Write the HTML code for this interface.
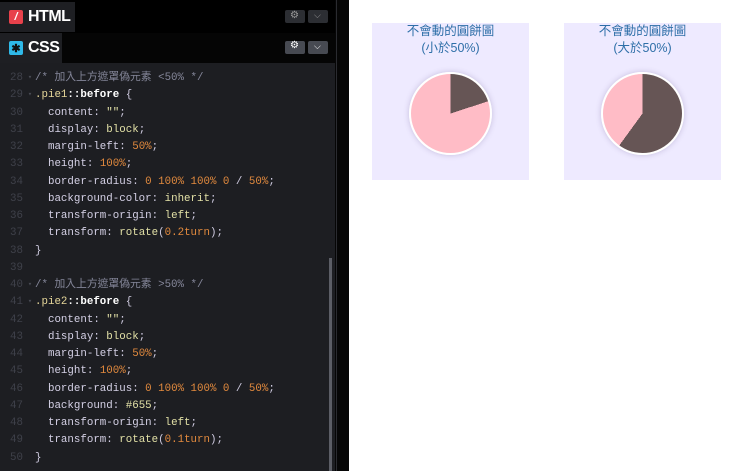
<!DOCTYPE html>
<html><head><meta charset="utf-8">
<style>
*{margin:0;padding:0;box-sizing:border-box}
body{width:740px;height:471px;overflow:hidden;background:#fff;position:relative;font-family:"Liberation Sans","Noto Sans CJK TC",sans-serif}
#left{position:absolute;left:0;top:0;width:349px;height:471px;background:#060606;overflow:hidden}
#ed{position:absolute;left:0;top:0;width:335px;height:471px;background:#1d1e22;overflow:hidden}
.bar{position:absolute;left:0;width:335px;background:#050505}
.tab{position:absolute;left:0;height:100%;display:flex;align-items:center;padding-left:9px;color:#fff;font-weight:bold;font-size:16px;letter-spacing:-0.5px}
.ico{width:14px;height:14px;border-radius:2px;margin-right:5px;display:flex;align-items:center;justify-content:center;font-size:11px;color:#111;letter-spacing:0}
.btn{position:absolute;height:13px;background:#3a3c43;border-radius:2px}
.code{position:absolute;left:0;top:70px;width:330px;font-family:"Liberation Mono","Noto Sans CJK TC",monospace;font-size:10.8px;color:#cfcbe0;white-space:normal}
.code div{height:17.25px;line-height:17.25px;overflow:hidden;white-space:pre}
.ln{display:inline-block;width:25px;text-align:right;color:#3f414a;padding-right:2px}
.ar{display:inline-block;width:10px;color:#4a4c55;font-size:7px;text-align:center;vertical-align:top}
.c{color:#85879a}.s{color:#e6d79a}.w{color:#fff;font-weight:bold}.k{color:#e2e0a6}.n{color:#e28a3e}.p{color:#d5d1e6}
#sb{position:absolute;left:329px;top:258px;width:3px;height:213px;background:#5c5e66}
.box{position:absolute;top:23px;width:157px;height:157px;background:#eeeaff;text-align:center;color:#2e6fa8;font-size:12.5px;line-height:17px;padding-top:0}
.pie{position:absolute;left:37px;top:49px;width:83px;height:83px;border-radius:50%;border:2px solid #fff;box-shadow:0 0 6px rgba(80,60,120,.25)}
</style></head><body>
<div id="left">
<div id="ed">
<div class="bar" style="top:0;height:33px;background:#000">
 <div class="tab" style="background:#1e1f23;width:75px;top:2px;height:30px"><span class="ico" style="background:#e8414b;color:#fff;font-style:italic">/</span>HTML</div>
 <div class="btn" style="left:285px;top:10px;width:20px;background:#2c2e33"></div>
 <div class="btn" style="left:308px;top:10px;width:20px;background:#2c2e33"></div>
 <div style="position:absolute;left:290px;top:10px;color:#999;font-size:10px">⚙</div>
 <div style="position:absolute;left:314px;top:10px;color:#999;font-size:9px">⌵</div>
</div>
<div class="bar" style="top:33px;height:30px;background:#050505">
 <div class="tab" style="background:#1e1f23;width:62px;top:0;height:30px"><span class="ico" style="background:#2fb9e8">✱</span>CSS</div>
 <div class="btn" style="left:285px;top:8px;width:20px;background:#474a52"></div>
 <div class="btn" style="left:308px;top:8px;width:20px;background:#474a52"></div>
 <div style="position:absolute;left:290px;top:7px;color:#fff;font-size:10px">⚙</div>
 <div style="position:absolute;left:314px;top:8px;color:#fff;font-size:9px">⌵</div>
</div>
<div class="code"><div><span class="ln">28</span><span class="ar">▾</span><span class="c">/* 加入上方遮罩偽元素 &lt;50% */</span></div><div><span class="ln">29</span><span class="ar">▾</span><span class="s">.pie1</span><span class="w">::before</span> {</div><div><span class="ln">30</span><span class="ar"> </span>  <span class="p">content</span>: <span class="k">""</span>;</div><div><span class="ln">31</span><span class="ar"> </span>  <span class="p">display</span>: <span class="k">block</span>;</div><div><span class="ln">32</span><span class="ar"> </span>  <span class="p">margin-left</span>: <span class="n">50%</span>;</div><div><span class="ln">33</span><span class="ar"> </span>  <span class="p">height</span>: <span class="n">100%</span>;</div><div><span class="ln">34</span><span class="ar"> </span>  <span class="p">border-radius</span>: <span class="n">0 100% 100% 0</span> / <span class="n">50%</span>;</div><div><span class="ln">35</span><span class="ar"> </span>  <span class="p">background-color</span>: <span class="k">inherit</span>;</div><div><span class="ln">36</span><span class="ar"> </span>  <span class="p">transform-origin</span>: <span class="k">left</span>;</div><div><span class="ln">37</span><span class="ar"> </span>  <span class="p">transform</span>: <span class="k">rotate</span>(<span class="n">0.2turn</span>);</div><div><span class="ln">38</span><span class="ar"> </span>}</div><div><span class="ln">39</span><span class="ar"> </span></div><div><span class="ln">40</span><span class="ar">▾</span><span class="c">/* 加入上方遮罩偽元素 &gt;50% */</span></div><div><span class="ln">41</span><span class="ar">▾</span><span class="s">.pie2</span><span class="w">::before</span> {</div><div><span class="ln">42</span><span class="ar"> </span>  <span class="p">content</span>: <span class="k">""</span>;</div><div><span class="ln">43</span><span class="ar"> </span>  <span class="p">display</span>: <span class="k">block</span>;</div><div><span class="ln">44</span><span class="ar"> </span>  <span class="p">margin-left</span>: <span class="n">50%</span>;</div><div><span class="ln">45</span><span class="ar"> </span>  <span class="p">height</span>: <span class="n">100%</span>;</div><div><span class="ln">46</span><span class="ar"> </span>  <span class="p">border-radius</span>: <span class="n">0 100% 100% 0</span> / <span class="n">50%</span>;</div><div><span class="ln">47</span><span class="ar"> </span>  <span class="p">background</span>: <span class="k">#655</span>;</div><div><span class="ln">48</span><span class="ar"> </span>  <span class="p">transform-origin</span>: <span class="k">left</span>;</div><div><span class="ln">49</span><span class="ar"> </span>  <span class="p">transform</span>: <span class="k">rotate</span>(<span class="n">0.1turn</span>);</div><div><span class="ln">50</span><span class="ar"> </span>}</div></div>
<div id="sb"></div>
</div>
<div style="position:absolute;left:336px;top:0;width:1px;height:471px;background:#2a2b30"></div>
</div>
<div class="box" style="left:372px">不會動的圓餅圖<br>(小於50%)
 <div class="pie" style="background:conic-gradient(#655 0 72deg,#ffbcc6 72deg 360deg)"></div></div>
<div class="box" style="left:564px">不會動的圓餅圖<br>(大於50%)
 <div class="pie" style="background:conic-gradient(#655 0 216deg,#ffbcc6 216deg 360deg)"></div></div>
</body></html>
